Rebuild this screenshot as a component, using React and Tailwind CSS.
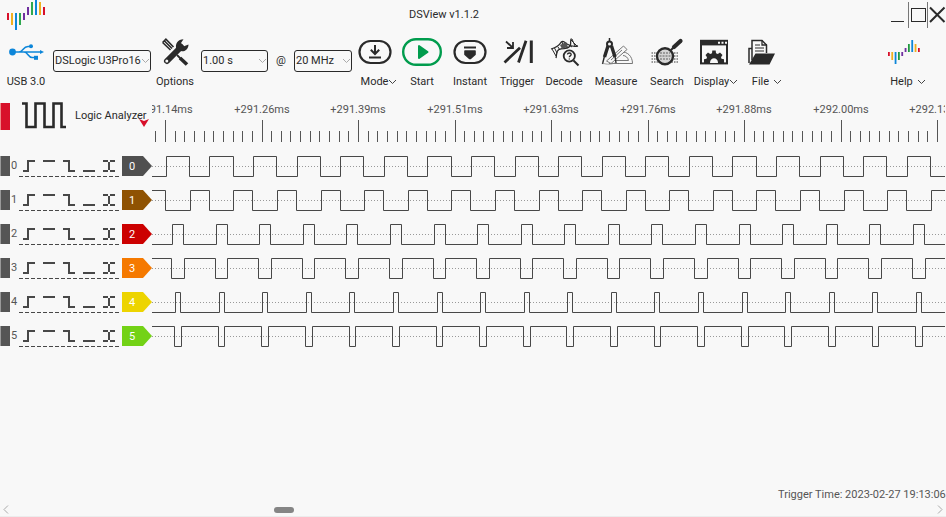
import React from "react";

const INK = "#2a2a2a";
const PERIOD = 43.588;

const channels = [
  { id: 0, color: "#505050", start: 166.3, width: 23.2, low: false },
  { id: 1, color: "#8f5202", start: 190.3, width: 19, low: false },
  { id: 2, color: "#cc0000", start: 172.5, width: 11, low: false },
  { id: 3, color: "#f57900", start: 171.5, width: 12.6, low: true },
  { id: 4, color: "#edd400", start: 175.5, width: 5, low: false },
  { id: 5, color: "#73d216", start: 174.7, width: 6.7, low: true },
];

const timeLabels = ["+291.14ms", "+291.26ms", "+291.39ms", "+291.51ms", "+291.63ms", "+291.76ms", "+291.88ms", "+292.00ms", "+292.13ms"];

function Icon({ children, w = 44, h = 32 }) {
  return (
    <svg width={w} height={h} viewBox={`0 0 ${w} ${h}`} fill="none" stroke={INK} strokeWidth="2" className="shrink-0 overflow-visible" aria-hidden="true">
      {children}
    </svg>
  );
}

const bars = [
  ["#d8102a", 13, 7], ["#f0b020", 13, 12], ["#0d86d9", 13, 17], ["#2fa84f", 13, 12], ["#7030a0", 13, 7],
  ["#7030a0", 7, 8], ["#2fa84f", 2, 13], ["#0d86d9", 0, 15], ["#f0b020", 2, 13], ["#d8102a", 7, 8],
];

function Logo() {
  return (
    <svg width="46" height="30" className="block shrink-0" aria-hidden="true">
      {bars.map(([c, y, h], i) => (
        <rect key={i} x={7 + i * 4} y={y} width="2" height={h} fill={c} />
      ))}
    </svg>
  );
}

function HelpIcon() {
  const small = [
    ["#d8102a", 16, 4], ["#f0b020", 16, 8], ["#0d86d9", 16, 12], ["#1f9a3f", 16, 8], ["#7030a0", 16, 4],
    ["#7030a0", 12, 4], ["#1f9a3f", 8, 8], ["#0d86d9", 4, 12], ["#f0b020", 8, 8], ["#d8102a", 12, 4],
  ];
  return (
    <Icon>
      {small.map(([c, y, h], i) => (
        <rect key={i} x={6 + i * 3.33} y={y} width="1.8" height={h} fill={c} stroke="none" />
      ))}
    </Icon>
  );
}

function UsbIcon() {
  return (
    <Icon>
      <g stroke="#0d86d9" strokeWidth="1.5">
        <circle cx="8.5" cy="16" r="3.4" fill="#0d86d9" stroke="none" />
        <path d="M8 16H38M15 16C19 16 19 10.5 24 10.5H27M20 16C24 16 24 21.5 28 21.5H31" />
        <circle cx="27" cy="10.2" r="2" fill="#0d86d9" stroke="none" />
        <rect x="30" y="19.8" width="4" height="4" fill="#0d86d9" stroke="none" />
        <path d="M36 14L40 16L36 18Z" fill="#0d86d9" stroke="none" />
      </g>
    </Icon>
  );
}

function ToolsIcon() {
  return (
    <Icon>
      <path d="M14 25L28 11" strokeWidth="6" strokeLinecap="round" />
      <path d="M23.5 13.5C21.5 8 25 3.2 30.5 3.2L28 7L31 10.2L35.5 8.4C35.5 13.5 31 16.5 26.5 14.8Z" fill={INK} stroke="none" />
      <circle cx="13.8" cy="25" r="1.5" fill="#f8f8f8" stroke="none" />
      <path d="M9.6 6.5L12.9 3.2L20.5 11M9.6 6.5L17.5 14M11.5 5L19 12.5" strokeWidth="1.6" />
      <path d="M24 19L28 23" strokeWidth="1.8" />
      <path d="M27 22L34 28.5" strokeWidth="3.6" />
    </Icon>
  );
}

function ModeIcon() {
  return (
    <Icon>
      <rect x="6.5" y="5" width="31" height="22" rx="11" strokeWidth="2.2" />
      <path d="M22 9V17.5M17.8 13.8L22 18L26.2 13.8M16 21.5H28" />
    </Icon>
  );
}

function StartIcon() {
  return (
    <Icon>
      <rect x="3.2" y="3.2" width="37.6" height="25.6" rx="12.8" stroke="#009c4d" strokeWidth="2.4" />
      <path d="M19 10V22L27.5 16Z" fill="#009c4d" stroke="#009c4d" strokeLinejoin="round" />
    </Icon>
  );
}

function InstantIcon() {
  return (
    <Icon>
      <rect x="6.5" y="5" width="31" height="22" rx="11" strokeWidth="2.2" />
      <path d="M16 11.5H28" strokeWidth="2" />
      <path d="M17 15H27V18.5L22.5 22.5H21.5L17 18.5Z" fill={INK} strokeWidth="1.6" strokeLinejoin="round" />
    </Icon>
  );
}

function TriggerIcon() {
  return (
    <Icon>
      <path d="M9.5 26.5L25 11.8M23.5 26.5L31 4.8" strokeWidth="2.8" />
      <path d="M36.3 4.5V27" strokeWidth="3" />
      <path d="M11 5.5L17 11M18 6V12H12" strokeWidth="1.8" />
    </Icon>
  );
}

function DecodeIcon() {
  return (
    <Icon>
      <g strokeWidth="1.3">
        <path d="M9 13C15 11 17 10 18.5 7C20 4 23 6 25 8C28 10 31 11 36 10" />
        <path d="M14 22C15 18 14 15 17 13.5C21 11.5 27 14 28.5 9C29 6 28 4 29.5 2.5" />
        <path d="M10 13L14 20M12.5 12L15 17M16 11L18 14M20 6L22 13M23 6.5L25 12.5M29 4L35 10M30 3L33 10M27 9L30 11" strokeWidth="1" />
      </g>
      <path d="M18 9L24 6L26 11L20 13Z" fill="#555" stroke="none" />
      <circle cx="27.3" cy="20" r="5.6" fill="#f8f8f8" strokeWidth="1.8" />
      <path d="M31.5 24.5L36.5 29.5" strokeWidth="2" />
      <path d="M25.5 18.5C25.5 16.5 29.2 16.5 29.2 18.6C29.2 20 27.3 19.8 27.3 21.2M27.3 22.4V23.6" strokeWidth="1.3" />
    </Icon>
  );
}

function MeasureIcon() {
  return (
    <Icon>
      <g stroke="#777" strokeWidth="1">
        <path d="M15 27.5H38.5C38.5 20 33 15.5 27.5 16M19 24.5H34.5C34 21.5 31.5 19.5 29 19.5" />
        <path d="M12.5 25L29.5 10L33 13.5L17 27.5Z" fill="#f8f8f8" />
        <path d="M17 24L28 14" />
      </g>
      <circle cx="15.5" cy="8" r="2.5" />
      <path d="M15.5 2V6" strokeWidth="1.5" />
      <path d="M14 10L10.5 21M17.5 10L21 21" strokeWidth="3.4" />
      <path d="M10.5 20L8.5 28M21 20L22 27" strokeWidth="1.4" />
      <path d="M8.5 27C13 29 18 28 21 27" strokeWidth="0.8" stroke="#888" />
    </Icon>
  );
}

function SearchIcon() {
  return (
    <Icon>
      <g stroke="#999" strokeWidth="2" strokeDasharray="1.5 1">
        <path d="M6.5 17H33M6.5 20H33M6.5 23H33M6.5 26H33" />
      </g>
      <circle cx="20" cy="20.3" r="8" fill="#d5d5d5" strokeWidth="2.4" />
      <path d="M15 17H25M14.5 20H25.5M15 23H25" stroke="#888" strokeWidth="1.4" strokeDasharray="2 1" />
      <path d="M26 14L29 11" />
      <path d="M29 11L35.5 5" strokeWidth="4.2" strokeLinecap="round" />
    </Icon>
  );
}

function DisplayIcon() {
  return (
    <Icon>
      <rect x="9" y="4.8" width="26" height="22.6" />
      <rect x="8" y="4" width="28" height="5.4" fill={INK} stroke="none" />
      <path d="M26 6.7H28M29.5 6.7H31.5M33 6.7H35" stroke="#f8f8f8" strokeWidth="2" />
      <path d="M12 27V23.2L14.5 22.8L15 21.2L13.5 19L16 16.5L18.2 18L20 17.2L20.3 14.5H23.7L24 17.2L25.8 18L28 16.5L30.5 19L29 21.2L29.5 22.8L32 23.2V27Z" fill={INK} stroke="none" />
      <path d="M18 27C18 20.8 26 20.8 26 27Z" fill="#f8f8f8" stroke="none" />
    </Icon>
  );
}

function FileIcon() {
  return (
    <Icon>
      <path d="M13 24V4.5H23L27.5 9V17" strokeWidth="1.5" />
      <path d="M23 4V9H28" strokeWidth="1.3" />
      <path d="M16 9H21M16 12H25M16 15H25" strokeWidth="1.1" />
      <path d="M13 12.5H10V27" strokeWidth="1.5" />
      <path d="M16.5 17.5H36L30.5 28.5H10Z" fill={INK} stroke="none" />
    </Icon>
  );
}

function Chevron({ light }) {
  return (
    <svg width="9" height="6" fill="none" stroke={light ? "#aaaaaa" : "#444444"} className="shrink-0" aria-hidden="true">
      <path d="M1 1L4.5 4.5L8 1" />
    </svg>
  );
}

function Tool({ icon, label, className, menu, labelClass = "" }) {
  return (
    <button type="button" className={`flex shrink-0 flex-col items-center gap-1.5 ${className}`}>
      {icon}
      <span className={`flex h-4 items-center whitespace-nowrap ${labelClass}`}>
        {label}
        {menu && <Chevron />}
      </span>
    </button>
  );
}

function Select({ label, value, className }) {
  return (
    <div className={`relative mt-3.5 shrink-0 ${className}`}>
      <select aria-label={label} defaultValue={value} className="block h-[22px] w-full appearance-none rounded-[3px] border border-[#2a2a2a] bg-transparent pl-px text-[#2a2a2a]">
        <option>{value}</option>
      </select>
      <span className="pointer-events-none absolute inset-y-0 right-px flex items-center">
        <Chevron light />
      </span>
    </div>
  );
}

function TitleBar() {
  return (
    <header className="flex h-[30px] items-center justify-between">
      <div className="flex flex-1">
        <Logo />
      </div>
      <h1 className="pr-[58px]">DSView v1.1.2</h1>
      <div className="flex h-[26px] flex-1 items-center justify-end">
        <button type="button" aria-label="Minimize">
          <Icon w={20} h={26}><path d="M3 19.5H16" strokeWidth="1" /></Icon>
        </button>
        <button type="button" aria-label="Maximize" className="border-x border-[#777]">
          <Icon w={18} h={26}><rect x="2.5" y="6.5" width="14" height="13" strokeWidth="1" /></Icon>
        </button>
        <button type="button" aria-label="Close">
          <Icon w={18} h={26}><path d="M2 5.5L16.5 20M16.5 5.5L2 20" /></Icon>
        </button>
      </div>
    </header>
  );
}

function Toolbar() {
  return (
    <nav className="flex h-[66px] items-start pt-1.5">
      <Tool icon={<UsbIcon />} label="USB 3.0" className="w-[52px]" />
      <Select label="Device" value="DSLogic U3Pro16" className="ml-px w-[98px]" />
      <Tool icon={<ToolsIcon />} label="Options" className="w-12" />
      <Select label="Duration" value="1.00 s" className="ml-0.5 w-[67px]" />
      <span className="mt-3.5 w-[26px] text-center leading-[22px]">@</span>
      <Select label="Sample rate" value="20 MHz" className="w-[58px]" />
      <Tool icon={<ModeIcon />} label="Mode" menu className="w-[46px]" labelClass="pl-2" />
      <Tool icon={<StartIcon />} label="Start" className="w-12" />
      <Tool icon={<InstantIcon />} label="Instant" className="w-12" />
      <Tool icon={<TriggerIcon />} label="Trigger" className="w-[46px]" />
      <Tool icon={<DecodeIcon />} label="Decode" className="w-12" />
      <Tool icon={<MeasureIcon />} label="Measure" className="w-14" />
      <Tool icon={<SearchIcon />} label="Search" className="w-[46px]" />
      <Tool icon={<DisplayIcon />} label="Display" menu className="w-12" labelClass="pl-1" />
      <Tool icon={<FileIcon />} label="File" menu className="w-[46px]" labelClass="gap-1 pl-3" />
      <Tool icon={<HelpIcon />} label="Help" menu className="mr-[18px] ml-auto w-12" labelClass="gap-1 pl-2" />
    </nav>
  );
}

const GUTTER = 152;

function Ruler() {
  const ticks = Array.from({ length: 160 }, (_, i) => i - 1);
  return (
    <svg className="h-[53px] min-w-0 flex-1 overflow-hidden" shapeRendering="crispEdges">
      {ticks.map((i) => {
        const x = Math.floor(165.5 + i * 9.65) - GUTTER;
        return <rect key={i} x={x} y={i % 10 === 0 ? 24 : 35} width="1" height={i % 10 === 0 ? 22 : 11} fill="#555555" />;
      })}
      {timeLabels.map((t, i) => (
        <text key={t} x={Math.floor(165.5 + i * 96.5) - GUTTER} y="17" textAnchor="middle" fill="#555555">{t}</text>
      ))}
    </svg>
  );
}

function Wave({ start, width, low }) {
  const rest = low ? 7.5 : 27.5;
  const active = low ? 27.5 : 7.5;
  let d = `M-50 ${rest}`;
  for (let n = -2; n < 40; n++) {
    const a = Math.floor(start + n * PERIOD) - GUTTER + 0.5;
    const b = Math.floor(start + n * PERIOD + width) - GUTTER + 0.5;
    d += `H${a}V${active}H${b}V${rest}`;
  }
  return (
    <svg className="h-[34px] min-w-0 flex-1 overflow-hidden" fill="none">
      <line x1="0" y1="17.5" x2="100%" y2="17.5" stroke="#999999" strokeDasharray="1 2" />
      <path d={d} stroke="#484848" />
    </svg>
  );
}

const edges = [
  ["Rising edge", "M4 22H10M9 23V12M8 12H16"],
  ["High level", "M4 12H16"],
  ["Falling edge", "M4 12H11M10 11V22M9 22H16"],
  ["Low level", "M4 22H16"],
  ["Any edge", "M4 12H9M11 12H16M4 22H9M11 22H16M10 13V21"],
];

function Channel({ id, color, ...wave }) {
  return (
    <div className="flex h-[34px] items-center">
      <span className="h-5 w-[10px] shrink-0 border-l border-[#999] bg-[#555]" />
      <span className="w-[9px] shrink-0 pl-px text-[#555]">{id}</span>
      <div className="flex shrink-0">
        {edges.map(([name, d]) => (
          <button key={name} type="button" aria-label={`${name}, channel ${id}`}>
            <svg width="20" height="34" fill="none" stroke="#484848" strokeWidth="2" className="block">
              <path d={d} />
              <path d="M0 27.5H20" strokeWidth="1" strokeDasharray="4 2" strokeDashoffset={edges.findIndex((e) => e[0] === name) * 20} />
            </svg>
          </button>
        ))}
      </div>
      <button type="button" className="relative ml-[3px] h-5 w-[30px] shrink-0 text-left text-white">
        <svg width="30" height="20" className="block" aria-hidden="true">
          <path d="M0 0H21L30 10L21 20H0Z" fill={color} />
        </svg>
        <span className="absolute inset-0 pl-[7px] leading-[22px]">{id}</span>
      </button>
      <Wave {...wave} />
    </div>
  );
}

export default function App() {
  return (
    <div className="flex min-h-screen flex-col overflow-hidden border-b border-[#ececec] bg-[#f8f8f8] font-['Roboto','Noto_Sans',sans-serif] text-[11px] leading-4 text-[#2a2a2a]">
      <TitleBar />
      <Toolbar />
      <main className="flex flex-1 flex-col pr-px">
        <div className="flex">
          <div className="relative flex h-[53px] w-[152px] shrink-0 items-start">
            <span className="mt-[7px] h-[27px] w-[10px] border-l border-[#e88] bg-[#d8102a]" />
            <svg width="56" height="40" fill="none" stroke={INK} strokeWidth="2.6" aria-hidden="true">
              <path d="M12 7.5H16.5V31H25.5V7.5H34.5V31H43.5V7.5H51.5V31H56" />
            </svg>
            <span className="mt-3 ml-[9px] whitespace-nowrap">Logic Analyzer</span>
            <svg width="10" height="8" className="absolute top-[23px] right-[3px]" aria-hidden="true">
              <path d="M0 0L5 2L10 0L5 8Z" fill="#d8102a" />
            </svg>
          </div>
          <Ruler />
        </div>
        {channels.map((c) => (
          <Channel key={c.id} {...c} />
        ))}
      </main>
      <footer>
        <p className="ml-auto w-[168px] whitespace-nowrap text-[#555]">Trigger Time: 2023-02-27 19:13:06</p>
        <div className="flex h-[13px] items-center px-[3px]">
          <svg width="6" height="9" fill="none" stroke="#aaa" aria-hidden="true"><path d="M5 0.5L1 4.5L5 8.5" /></svg>
          <div className="flex-1 pl-[265px]">
            <div className="h-1.5 w-5 rounded-full bg-[#858585]" />
          </div>
          <svg width="6" height="9" fill="none" stroke="#aaa" aria-hidden="true"><path d="M1 0.5L5 4.5L1 8.5" /></svg>
        </div>
      </footer>
    </div>
  );
}
